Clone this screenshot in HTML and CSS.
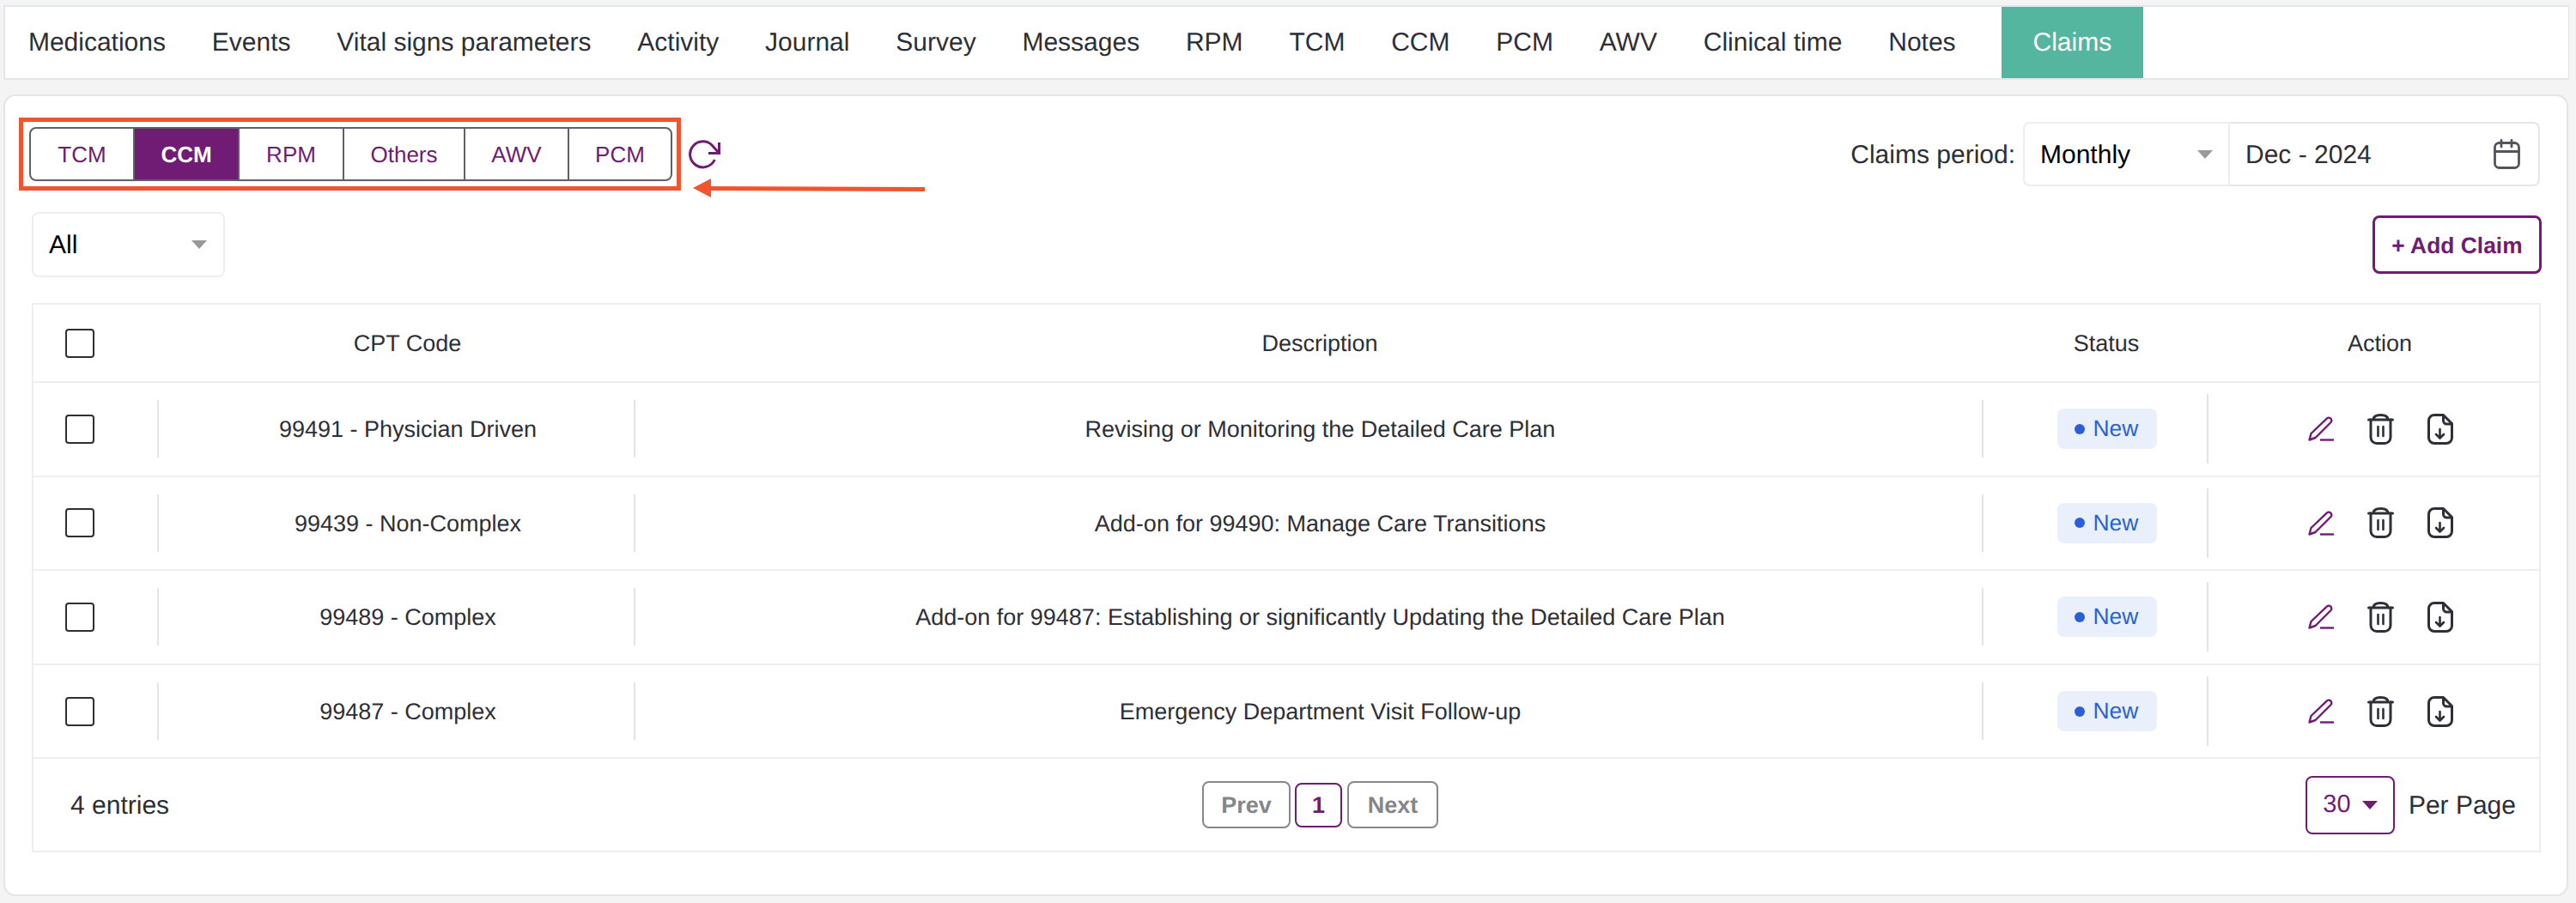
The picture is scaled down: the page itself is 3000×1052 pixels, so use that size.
FILE: index.html
```html
<!DOCTYPE html>
<html lang="en">
<head>
    <meta charset="UTF-8">
    <title>Claims</title>
    <link rel="stylesheet" href="styles.css">
</head>
<body>
    <nav class="tabs">
        <a class="tab">Medications</a>
        <a class="tab">Events</a>
        <a class="tab">Vital signs parameters</a>
        <a class="tab">Activity</a>
        <a class="tab">Journal</a>
        <a class="tab">Survey</a>
        <a class="tab">Messages</a>
        <a class="tab">RPM</a>
        <a class="tab">TCM</a>
        <a class="tab">CCM</a>
        <a class="tab">PCM</a>
        <a class="tab">AWV</a>
        <a class="tab">Clinical time</a>
        <a class="tab">Notes</a>
        <a class="tab tab-active">Claims</a>
    </nav>

    <main class="card">
        <div class="toolbar">
            <div class="toolbar-left">
                <div class="segments">
                    <button class="segment"><span>TCM</span></button>
                    <button class="segment segment-active"><span>CCM</span></button>
                    <button class="segment"><span>RPM</span></button>
                    <button class="segment"><span>Others</span></button>
                    <button class="segment"><span>AWV</span></button>
                    <button class="segment"><span>PCM</span></button>
                    <div class="note-box"></div>
                    <svg class="note-arrow" width="270" height="22" viewBox="0 0 270 22">
                        <path d="M0 11 L21 0 V9 L270 10 V15 L21 14 V22 Z" fill="#f1552d"/>
                    </svg>
                </div>
                <svg class="refresh" width="38" height="34" viewBox="0 0 38 34" fill="none" stroke="#701c74" stroke-width="3">
                    <path d="M30.3 23 A15 15 0 1 1 27.5 6.5 L35 15"/>
                    <path d="M35.5 3 V15.5 H23"/>
                </svg>
            </div>
            <div class="period">
                <span class="text-low">Claims period:</span>
                <div class="period-fields">
                    <div class="field field-type">
                        <span class="text-low">Monthly</span>
                        <i class="caret"></i>
                    </div>
                    <div class="field field-date">
                        <span class="text-low">Dec - 2024</span>
                        <svg width="31" height="35" viewBox="0 0 31 35" fill="none" stroke="#54555b" stroke-width="2.8" stroke-linecap="round">
                            <rect x="1.5" y="4.5" width="28" height="29" rx="5"/>
                            <path d="M1.5 14.5H29.5M9 1.5V9M21 1.5V9"/>
                        </svg>
                    </div>
                </div>
            </div>
        </div>

        <div class="filters">
            <div class="field field-all">
                <span class="text-low">All</span>
                <i class="caret"></i>
            </div>
            <button class="add-claim"><span>+ Add Claim</span></button>
        </div>

        <div class="table">
            <div class="row row-head">
                <div class="cell-check"><span class="checkbox"></span></div>
                <div class="head-cell">CPT Code</div>
                <div class="head-cell">Description</div>
                <div class="head-cell">Status</div>
                <div class="head-cell head-action">Action</div>
            </div>

            <div class="row">
                <div class="cell-check"><span class="checkbox"></span></div>
                <div class="cell"><span class="text-low">99491 - Physician Driven</span></div>
                <div class="cell"><span class="text-low">Revising or Monitoring the Detailed Care Plan</span></div>
                <div class="cell"><span class="badge"><i class="dot"></i>New</span></div>
                <div class="cell cell-action">
                    <svg width="30" height="29" viewBox="0 0 30 29" fill="none" stroke="#701c74" stroke-width="2.4" stroke-linejoin="round"><path d="M1.5 27.5 L3.5 20 L21.5 2.8 a3.2 3.2 0 0 1 5 4.2 L8.5 25 Z"/><path d="M14 27.5H30"/></svg>
                    <svg width="31" height="36" viewBox="0 0 31 36" fill="none" stroke="#2e3037" stroke-width="3" stroke-linecap="round"><path d="M1.5 7H29.5M7 7C7 3.5 10 1.5 15.5 1.5S24 3.5 24 7"/><path d="M4 7V27.5A7 7 0 0 0 11 34.5H20A7 7 0 0 0 27 27.5V7"/><path d="M12.5 15V26M18.5 15V26" stroke-width="2.6"/></svg>
                    <svg width="30" height="36" viewBox="0 0 30 36" fill="none" stroke="#2e3037" stroke-width="3" stroke-linecap="round" stroke-linejoin="round"><path d="M18.5 1.5H8A6.5 6.5 0 0 0 1.5 8V28A6.5 6.5 0 0 0 8 34.5H22A6.5 6.5 0 0 0 28.5 28V11.5Z"/><path d="M18.5 2V8A4 4 0 0 0 22.5 12H28"/><path d="M14.5 18V28M10 24L14.5 28.5L19 24" stroke-width="2.6"/></svg>
                </div>
            </div>

            <div class="row">
                <div class="cell-check"><span class="checkbox"></span></div>
                <div class="cell"><span class="text-low">99439 - Non-Complex</span></div>
                <div class="cell"><span class="text-low">Add-on for 99490: Manage Care Transitions</span></div>
                <div class="cell"><span class="badge"><i class="dot"></i>New</span></div>
                <div class="cell cell-action">
                    <svg width="30" height="29" viewBox="0 0 30 29" fill="none" stroke="#701c74" stroke-width="2.4" stroke-linejoin="round"><path d="M1.5 27.5 L3.5 20 L21.5 2.8 a3.2 3.2 0 0 1 5 4.2 L8.5 25 Z"/><path d="M14 27.5H30"/></svg>
                    <svg width="31" height="36" viewBox="0 0 31 36" fill="none" stroke="#2e3037" stroke-width="3" stroke-linecap="round"><path d="M1.5 7H29.5M7 7C7 3.5 10 1.5 15.5 1.5S24 3.5 24 7"/><path d="M4 7V27.5A7 7 0 0 0 11 34.5H20A7 7 0 0 0 27 27.5V7"/><path d="M12.5 15V26M18.5 15V26" stroke-width="2.6"/></svg>
                    <svg width="30" height="36" viewBox="0 0 30 36" fill="none" stroke="#2e3037" stroke-width="3" stroke-linecap="round" stroke-linejoin="round"><path d="M18.5 1.5H8A6.5 6.5 0 0 0 1.5 8V28A6.5 6.5 0 0 0 8 34.5H22A6.5 6.5 0 0 0 28.5 28V11.5Z"/><path d="M18.5 2V8A4 4 0 0 0 22.5 12H28"/><path d="M14.5 18V28M10 24L14.5 28.5L19 24" stroke-width="2.6"/></svg>
                </div>
            </div>

            <div class="row">
                <div class="cell-check"><span class="checkbox"></span></div>
                <div class="cell"><span class="text-low">99489 - Complex</span></div>
                <div class="cell"><span class="text-low">Add-on for 99487: Establishing or significantly Updating the Detailed Care Plan</span></div>
                <div class="cell"><span class="badge"><i class="dot"></i>New</span></div>
                <div class="cell cell-action">
                    <svg width="30" height="29" viewBox="0 0 30 29" fill="none" stroke="#701c74" stroke-width="2.4" stroke-linejoin="round"><path d="M1.5 27.5 L3.5 20 L21.5 2.8 a3.2 3.2 0 0 1 5 4.2 L8.5 25 Z"/><path d="M14 27.5H30"/></svg>
                    <svg width="31" height="36" viewBox="0 0 31 36" fill="none" stroke="#2e3037" stroke-width="3" stroke-linecap="round"><path d="M1.5 7H29.5M7 7C7 3.5 10 1.5 15.5 1.5S24 3.5 24 7"/><path d="M4 7V27.5A7 7 0 0 0 11 34.5H20A7 7 0 0 0 27 27.5V7"/><path d="M12.5 15V26M18.5 15V26" stroke-width="2.6"/></svg>
                    <svg width="30" height="36" viewBox="0 0 30 36" fill="none" stroke="#2e3037" stroke-width="3" stroke-linecap="round" stroke-linejoin="round"><path d="M18.5 1.5H8A6.5 6.5 0 0 0 1.5 8V28A6.5 6.5 0 0 0 8 34.5H22A6.5 6.5 0 0 0 28.5 28V11.5Z"/><path d="M18.5 2V8A4 4 0 0 0 22.5 12H28"/><path d="M14.5 18V28M10 24L14.5 28.5L19 24" stroke-width="2.6"/></svg>
                </div>
            </div>

            <div class="row">
                <div class="cell-check"><span class="checkbox"></span></div>
                <div class="cell"><span class="text-low">99487 - Complex</span></div>
                <div class="cell"><span class="text-low">Emergency Department Visit Follow-up</span></div>
                <div class="cell"><span class="badge"><i class="dot"></i>New</span></div>
                <div class="cell cell-action">
                    <svg width="30" height="29" viewBox="0 0 30 29" fill="none" stroke="#701c74" stroke-width="2.4" stroke-linejoin="round"><path d="M1.5 27.5 L3.5 20 L21.5 2.8 a3.2 3.2 0 0 1 5 4.2 L8.5 25 Z"/><path d="M14 27.5H30"/></svg>
                    <svg width="31" height="36" viewBox="0 0 31 36" fill="none" stroke="#2e3037" stroke-width="3" stroke-linecap="round"><path d="M1.5 7H29.5M7 7C7 3.5 10 1.5 15.5 1.5S24 3.5 24 7"/><path d="M4 7V27.5A7 7 0 0 0 11 34.5H20A7 7 0 0 0 27 27.5V7"/><path d="M12.5 15V26M18.5 15V26" stroke-width="2.6"/></svg>
                    <svg width="30" height="36" viewBox="0 0 30 36" fill="none" stroke="#2e3037" stroke-width="3" stroke-linecap="round" stroke-linejoin="round"><path d="M18.5 1.5H8A6.5 6.5 0 0 0 1.5 8V28A6.5 6.5 0 0 0 8 34.5H22A6.5 6.5 0 0 0 28.5 28V11.5Z"/><path d="M18.5 2V8A4 4 0 0 0 22.5 12H28"/><path d="M14.5 18V28M10 24L14.5 28.5L19 24" stroke-width="2.6"/></svg>
                </div>
            </div>

            <div class="table-footer">
                <span class="entries text-low">4 entries</span>
                <div class="pager">
                    <button class="page-btn"><span>Prev</span></button>
                    <button class="page-btn page-current"><span>1</span></button>
                    <button class="page-btn page-next"><span>Next</span></button>
                </div>
                <div class="per-page">
                    <button class="per-page-btn">30<i class="caret caret-purple"></i></button>
                    <span class="text-low">Per Page</span>
                </div>
            </div>
        </div>
    </main>
</body>
</html>
```

FILE: styles.css
```css
* {
    box-sizing: border-box;
}

body {
    margin: 0;
    padding: 6px 8px 0 4px;
    height: 1052px;
    overflow: hidden;
    font-family: "Liberation Sans", Arial, sans-serif;
    text-rendering: geometricPrecision;
    background-color: #f4f4f5;
    color: #2e2f36;
}

button {
    font-family: inherit;
    text-rendering: inherit;
    background: none;
    padding: 0;
    margin: 0;
}

button span,
.text-low {
    padding-top: 2px;
}

button span {
    display: block;
}

.tabs {
    display: flex;
    height: 87px;
    background-color: #fff;
    border: 2px solid #e3e6ea;
    border-right-width: 1px;
    font-size: 30px;
}

.tab {
    display: flex;
    align-items: center;
    padding: 0 26.9px;
}

.tab-active {
    margin-left: 26px;
    padding: 0 37px;
    background-color: #55b6a0;
    color: #fff;
}

.card {
    margin: 17px 1px 0 0;
    padding: 30px 30px 49px 31px;
    background-color: #fff;
    border: 2px solid #e4e5e9;
    border-radius: 14px;
}

.toolbar {
    display: flex;
    justify-content: space-between;
    align-items: center;
    height: 75px;
    margin-bottom: 30px;
}

.toolbar-left {
    display: flex;
    align-items: center;
    margin-left: -3px;
}

.segments {
    position: relative;
    display: grid;
    grid-template-columns: 121px 122px 122px 141px 121px 1fr;
    width: 749px;
    height: 63px;
    border: 2px solid #5f6068;
    border-radius: 8px;
}

.segment {
    border: none;
    border-right: 2px solid #5f6068;
    font-size: 26px;
    color: #701c74;
}

.segment:last-of-type {
    border-right: none;
}

.segment-active {
    background-color: #701c74;
    color: #fff;
    font-weight: bold;
}

.note-box {
    position: absolute;
    top: -13px;
    left: -14px;
    width: 771px;
    height: 85px;
    border: 5px solid #ee5530;
}

.note-arrow {
    position: absolute;
    top: 58px;
    left: 771px;
}

.refresh {
    margin-left: 19px;
}

.period {
    display: flex;
    align-items: center;
    gap: 9px;
    margin-right: 1px;
    font-size: 30px;
}

.period-fields {
    display: flex;
    height: 75px;
}

.field {
    display: flex;
    justify-content: space-between;
    align-items: center;
    background-color: #fff;
    border: 2px solid #eeeeee;
    font-size: 30px;
}

.field-type {
    width: 241px;
    padding: 0 18px;
    border-radius: 8px 0 0 8px;
    color: #000;
}

.field-date {
    width: 361px;
    padding: 0 21px 0 18px;
    border-left: none;
    border-color: #e3e6ea;
    border-radius: 0 8px 8px 0;
}

.caret {
    display: block;
    width: 0;
    height: 0;
    border-left: 9px solid transparent;
    border-right: 9px solid transparent;
    border-top: 10px solid #999;
}

.filters {
    display: flex;
    justify-content: space-between;
    align-items: center;
    height: 76px;
    margin-bottom: 30px;
}

.field-all {
    width: 225px;
    height: 76px;
    padding: 0 19px 0 18px;
    border-radius: 8px;
    color: #000;
}

.add-claim {
    width: 197px;
    height: 68px;
    margin-right: -1px;
    border: 3px solid #701c74;
    border-radius: 8px;
    font-size: 26.4px;
    font-weight: bold;
    color: #701c74;
}

.table {
    border: 2px solid #eeeeee;
    font-size: 27px;
}

.row {
    display: grid;
    grid-template-columns: 144px 555px 1570px 262px 1fr;
    align-items: center;
    height: 109.6px;
    border-bottom: 2px solid #eeeeee;
}

.row-head {
    height: 91px;
}

.row:last-of-type {
    height: 111px;
    border-bottom-width: 4px;
}

.cell-check {
    padding-left: 37px;
    line-height: 0;
}

.checkbox {
    display: inline-block;
    width: 34px;
    height: 34px;
    border: 2px solid #2e2f36;
    border-radius: 4px;
}

.head-cell {
    padding: 2px 0 0 28px;
    text-align: center;
}

.head-action {
    padding-left: 16px;
}

.cell {
    display: flex;
    justify-content: center;
    align-items: center;
    height: 67px;
    padding-left: 27px;
    border-left: 2px solid #e4e4e4;
}

.cell-action {
    gap: 39px;
    height: 81px;
    padding-left: 16px;
}

.badge {
    display: flex;
    align-items: center;
    gap: 10px;
    width: 116px;
    height: 47px;
    padding-left: 20px;
    background-color: #e9effb;
    border-radius: 8px;
    font-size: 26.4px;
    color: #2b5fd9;
}

.dot {
    width: 12px;
    height: 12px;
    border-radius: 50%;
    background-color: #2b5fd9;
}

.table-footer {
    display: grid;
    grid-template-columns: 1318px auto 1fr;
    align-items: center;
    height: 107px;
    padding: 0 27px 0 43px;
}

.entries {
    font-size: 30px;
}

.pager {
    display: flex;
    align-items: center;
    gap: 5px;
}

.page-btn {
    width: 103px;
    height: 55px;
    border: 2px solid #87878d;
    border-radius: 8px;
    font-size: 27px;
    font-weight: bold;
    color: #85868c;
}

.page-current {
    width: 55px;
    height: 52px;
    margin-right: 1px;
    border-color: #701c74;
    color: #701c74;
}

.page-next {
    width: 106px;
}

.per-page {
    display: flex;
    justify-content: flex-end;
    align-items: center;
    gap: 16px;
    font-size: 30px;
}

.per-page-btn {
    display: flex;
    justify-content: center;
    align-items: center;
    gap: 13px;
    width: 104px;
    height: 68px;
    border: 2px solid #701c74;
    border-radius: 8px;
    font-size: 29px;
    color: #701c74;
}

.caret-purple {
    border-top-color: #701c74;
}
```
